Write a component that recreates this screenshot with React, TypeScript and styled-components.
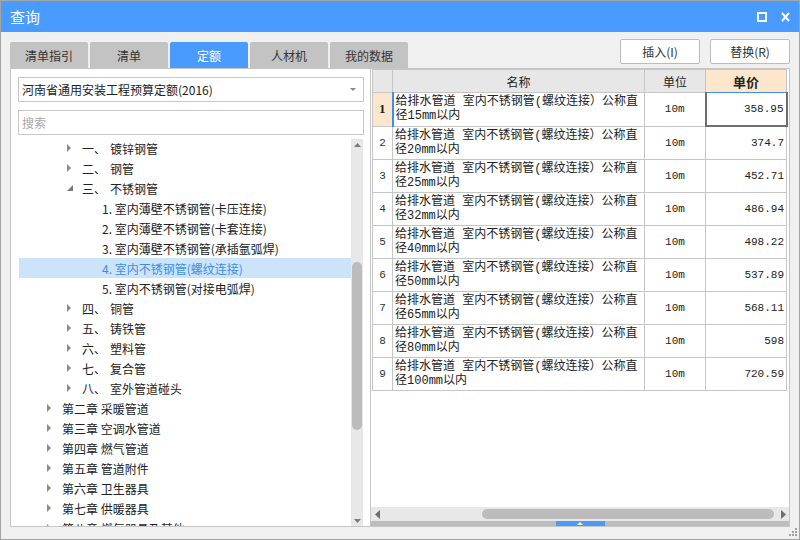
import React from 'react';
import styled, { createGlobalStyle, css } from 'styled-components';

const GlobalStyle = createGlobalStyle`
  html, body {
    margin: 0;
    padding: 0;
  }
  #root {
    width: 800px;
    height: 540px;
  }
`;

const blue = '#4a9bff';
const line = '#c6c6c6';

const Window = styled.div`
  box-sizing: border-box;
  width: 800px;
  height: 540px;
  border: 1px solid #a4a4a4;
  background: #f0f0f0;
  display: flex;
  flex-direction: column;
  font-family: "Noto Sans CJK SC", "Noto Sans", sans-serif;
  font-size: 12px;
  color: #222;
  overflow: hidden;
`;

const TitleBar = styled.div`
  height: 31px;
  flex-shrink: 0;
  background: ${blue};
  color: #fff;
  display: flex;
  align-items: center;
  justify-content: space-between;
  padding: 0 9px 0 9px;
  font-size: 15px;
`;

const TitleIcons = styled.div`
  display: flex;
  align-items: center;
  gap: 14px;
`;

const Body = styled.div`
  flex: 1;
  display: flex;
  flex-direction: column;
  padding: 7px 9px 12px 9px;
  min-height: 0;
  position: relative;
`;

const TopRow = styled.div`
  height: 29px;
  flex-shrink: 0;
  display: flex;
  align-items: flex-start;
`;

const Tabs = styled.div`
  align-self: flex-end;
  display: flex;
  gap: 2px;
`;

const Tab = styled.div<{ $active?: boolean }>`
  width: 78px;
  height: 26px;
  display: flex;
  align-items: center;
  justify-content: center;
  border-radius: 2px 2px 0 0;
  background: #c3c3c3;
  color: #333;
  font-size: 12px;
  ${p => p.$active && css`
    background: ${blue};
    color: #fff;
  `}
`;

const Buttons = styled.div`
  margin-left: auto;
  display: flex;
  gap: 10px;
`;

const Button = styled.div`
  box-sizing: border-box;
  width: 80px;
  height: 25px;
  border: 1px solid #bcbcbc;
  border-radius: 2px;
  background: #fff;
  display: flex;
  align-items: center;
  justify-content: center;
  color: #333;
`;

const Panels = styled.div`
  flex: 1;
  display: flex;
  min-height: 0;
`;

const LeftPanel = styled.div`
  box-sizing: border-box;
  width: 361px;
  flex-shrink: 0;
  background: #fff;
  border: 1px solid ${line};
  padding: 8px 6px 0 7px;
  display: flex;
  flex-direction: column;
`;

const Field = styled.div<{ $placeholder?: boolean }>`
  box-sizing: border-box;
  height: 25px;
  flex-shrink: 0;
  border: 1px solid #c8c8c8;
  display: flex;
  align-items: center;
  padding: 0 4px 0 3px;
  color: ${p => (p.$placeholder ? '#a8a8a8' : '#222')};
  & + & {
    margin-top: 8px;
  }
`;

const Caret = styled.span`
  margin-left: auto;
  width: 0;
  height: 0;
  border-left: 3px solid transparent;
  border-right: 3px solid transparent;
  border-top: 3px solid #888;
  margin-right: 3px;
`;

const TreeBox = styled.div`
  flex: 1;
  min-height: 0;
  display: flex;
  margin-top: 4px;
`;

const TreeList = styled.div`
  flex: 1;
  overflow: hidden;
  margin-left: 1px;
  margin-top: -1px;
`;

const TreeRow = styled.div<{ $indent: number; $selected?: boolean }>`
  height: 20px;
  display: flex;
  align-items: center;
  padding-left: ${p => p.$indent}px;
  white-space: nowrap;
  ${p => p.$selected && css`
    background: #cce4fa;
    color: #3d8fe0;
  `}
`;

const Toggle = styled.span`
  width: 15px;
  height: 20px;
  display: flex;
  align-items: center;
  flex-shrink: 0;
`;

const Num = styled.span`
  width: 28px;
  flex-shrink: 0;
`;

const VScroll = styled.div`
  width: 12px;
  margin-right: 1px;
  background: #e8e8e8;
  display: flex;
  flex-direction: column;
  align-items: center;
`;

const ScrollArrow = styled.div`
  height: 11px;
  display: flex;
  align-items: center;
  justify-content: center;
  flex-shrink: 0;
`;

const VThumb = styled.div`
  width: 10px;
  height: 168px;
  margin-top: 112px;
  border-radius: 5px;
  background: #bcbcbc;
`;

const Spacer = styled.div`
  flex: 1;
`;

const RightPanel = styled.div`
  flex: 1;
  display: flex;
  flex-direction: column;
  border-right: 1px solid ${line};
  border-top: 1px solid ${line};
  border-bottom: 1px solid ${line};
  background: #fff;
  min-width: 0;
`;

const TableArea = styled.div`
  flex: 1;
  min-height: 0;
  overflow: hidden;
  padding-left: 1px;
`;

const Table = styled.table`
  border-collapse: collapse;
  table-layout: fixed;
  width: 414px;
  font-size: 12px;
`;

const Th = styled.th<{ $hot?: boolean }>`
  height: 22px;
  padding: 0;
  background: #e7e7e7;
  border: 1px solid ${line};
  font-weight: normal;
  color: #222;
  ${p => p.$hot && css`
    background: #fde7cc;
    font-weight: bold;
    font-size: 13px;
    border-bottom: 1px solid #3c8ff0;
  `}
`;

const Td = styled.td`
  height: 32px;
  padding: 0;
  border: 1px solid ${line};
  vertical-align: middle;
`;

const NoCell = styled(Td)<{ $current?: boolean }>`
  text-align: center;
  font-family: "Liberation Mono", monospace;
  font-size: 11px;
  color: #333;
  ${p => p.$current && css`
    background: #fde7cc;
    font-family: "Liberation Serif", serif;
    font-weight: bold;
    font-size: 13px;
    color: #222;
  `}
`;

const NameCell = styled(Td)<{ $current?: boolean }>`
  padding: 0 5px 0 2px;
  line-height: 14px;
  font-family: "Liberation Mono", "Noto Sans CJK SC", monospace;
  word-break: break-all;
  ${p => p.$current && css`
    border-left: 2px solid #3c8ff0;
  `}
`;

const UnitCell = styled(Td)`
  text-align: center;
  font-family: "Liberation Mono", monospace;
  font-size: 11px;
`;

const PriceCell = styled(Td)<{ $current?: boolean }>`
  text-align: right;
  padding-right: 2px;
  font-family: "Liberation Mono", monospace;
  font-size: 11px;
  ${p => p.$current && css`
    border-left: 2px solid #6e6e6e;
    border-right: 2px solid #6e6e6e;
    border-bottom: 2px solid #6e6e6e;
  `}
`;

const HScroll = styled.div`
  height: 14px;
  flex-shrink: 0;
  background: #e8e8e8;
  display: flex;
  align-items: center;
  padding: 0 3px 0 4px;
`;

const HThumb = styled.div`
  height: 10px;
  width: 292px;
  margin-left: 102px;
  margin-right: auto;
  border-radius: 5px;
  background: #bcbcbc;
`;

const SplitBar = styled.div`
  height: 5px;
  flex-shrink: 0;
  background: #bdbdbd;
  display: flex;
  justify-content: center;
`;

const SplitHandle = styled.div`
  width: 49px;
  background: ${blue};
  display: flex;
  align-items: center;
  justify-content: center;
`;

const Grip = styled.svg`
  position: absolute;
  right: 1px;
  bottom: 2px;
`;

const RightTri = () => (
  <svg width="5" height="8" viewBox="0 0 5 8"><path d="M0 0 L4 4 L0 8 Z" fill="#8a8a8a" /></svg>
);

const OpenTri = () => (
  <svg width="6" height="6" viewBox="0 0 6 6"><path d="M6 0 L6 6 L0 6 Z" fill="#7a7a7a" /></svg>
);

type Node = { kind: 'chapter' | 'section' | 'item'; no?: string; name: string; open?: boolean; selected?: boolean };

const tree: Node[] = [
  { kind: 'section', no: '一、', name: '镀锌钢管' },
  { kind: 'section', no: '二、', name: '钢管' },
  { kind: 'section', no: '三、', name: '不锈钢管', open: true },
  { kind: 'item', name: '1. 室内薄壁不锈钢管(卡压连接)' },
  { kind: 'item', name: '2. 室内薄壁不锈钢管(卡套连接)' },
  { kind: 'item', name: '3. 室内薄壁不锈钢管(承插氩弧焊)' },
  { kind: 'item', name: '4. 室内不锈钢管(螺纹连接)', selected: true },
  { kind: 'item', name: '5. 室内不锈钢管(对接电弧焊)' },
  { kind: 'section', no: '四、', name: '铜管' },
  { kind: 'section', no: '五、', name: '铸铁管' },
  { kind: 'section', no: '六、', name: '塑料管' },
  { kind: 'section', no: '七、', name: '复合管' },
  { kind: 'section', no: '八、', name: '室外管道碰头' },
  { kind: 'chapter', name: '第二章 采暖管道' },
  { kind: 'chapter', name: '第三章 空调水管道' },
  { kind: 'chapter', name: '第四章 燃气管道' },
  { kind: 'chapter', name: '第五章 管道附件' },
  { kind: 'chapter', name: '第六章 卫生器具' },
  { kind: 'chapter', name: '第七章 供暖器具' },
  { kind: 'chapter', name: '第八章 燃气器具及其他' },
];

const rows = [
  { d: '15', price: '358.95' },
  { d: '20', price: '374.7' },
  { d: '25', price: '452.71' },
  { d: '32', price: '486.94' },
  { d: '40', price: '498.22' },
  { d: '50', price: '537.89' },
  { d: '65', price: '568.11' },
  { d: '80', price: '598' },
  { d: '100', price: '720.59' },
];

const indentOf = (n: Node) => (n.kind === 'chapter' ? 28 : n.kind === 'section' ? 48 : 83);

const App: React.FC = () => {
  const tabs = ['清单指引', '清单', '定额', '人材机', '我的数据'];
  return (
    <>
      <GlobalStyle />
      <Window>
        <TitleBar>
          <span>查询</span>
          <TitleIcons>
            <svg width="10" height="10" viewBox="0 0 10 10">
              <rect x="1" y="1" width="8" height="8" fill="none" stroke="#fff" strokeWidth="2" />
            </svg>
            <svg width="9" height="10" viewBox="0 0 9 10">
              <path d="M1 1 L8 9 M8 1 L1 9" stroke="#fff" strokeWidth="2" />
            </svg>
          </TitleIcons>
        </TitleBar>
        <Body>
          <TopRow>
            <Tabs>
              {tabs.map(t => (
                <Tab key={t} $active={t === '定额'}>{t}</Tab>
              ))}
            </Tabs>
            <Buttons>
              <Button>插入(I)</Button>
              <Button>替换(R)</Button>
            </Buttons>
          </TopRow>
          <Panels>
            <LeftPanel>
              <Field>
                河南省通用安装工程预算定额(2016)
                <Caret />
              </Field>
              <Field $placeholder>搜索</Field>
              <TreeBox>
                <TreeList>
                  {tree.map(n => (
                    <TreeRow key={n.name} $indent={indentOf(n)} $selected={n.selected}>
                      {n.kind !== 'item' && (
                        <Toggle>{n.open ? <OpenTri /> : <RightTri />}</Toggle>
                      )}
                      {n.no && <Num>{n.no}</Num>}
                      <span>{n.name}</span>
                    </TreeRow>
                  ))}
                </TreeList>
                <VScroll>
                  <ScrollArrow>
                    <svg width="7" height="4" viewBox="0 0 7 4"><path d="M0 4 L3.5 0 L7 4 Z" fill="#7a7a7a" /></svg>
                  </ScrollArrow>
                  <VThumb />
                  <Spacer />
                  <ScrollArrow>
                    <svg width="7" height="4" viewBox="0 0 7 4"><path d="M0 0 L3.5 4 L7 0 Z" fill="#7a7a7a" /></svg>
                  </ScrollArrow>
                </VScroll>
              </TreeBox>
            </LeftPanel>
            <RightPanel>
              <TableArea>
                <Table>
                  <colgroup>
                    <col style={{ width: 20 }} />
                    <col style={{ width: 252 }} />
                    <col style={{ width: 61 }} />
                    <col style={{ width: 81 }} />
                  </colgroup>
                  <thead>
                    <tr>
                      <Th />
                      <Th>名称</Th>
                      <Th>单位</Th>
                      <Th $hot>单价</Th>
                    </tr>
                  </thead>
                  <tbody>
                    {rows.map((r, i) => (
                      <tr key={r.d}>
                        <NoCell $current={i === 0}>{i + 1}</NoCell>
                        <NameCell $current={i === 0}>
                          给排水管道 室内不锈钢管(螺纹连接）公称直径{r.d}mm以内
                        </NameCell>
                        <UnitCell>10m</UnitCell>
                        <PriceCell $current={i === 0}>{r.price}</PriceCell>
                      </tr>
                    ))}
                  </tbody>
                </Table>
              </TableArea>
              <HScroll>
                <svg width="5" height="9" viewBox="0 0 5 9"><path d="M5 0 L0 4.5 L5 9 Z" fill="#6e6e6e" /></svg>
                <HThumb />
                <svg width="5" height="9" viewBox="0 0 5 9"><path d="M0 0 L5 4.5 L0 9 Z" fill="#6e6e6e" /></svg>
              </HScroll>
              <SplitBar>
                <SplitHandle>
                  <svg width="6" height="3" viewBox="0 0 6 3"><path d="M0 3 L3 0 L6 3 Z" fill="#fff" /></svg>
                </SplitHandle>
              </SplitBar>
            </RightPanel>
          </Panels>
          <Grip width="9" height="9" viewBox="0 0 9 9">
            <g fill="#a0a0a0">
              <rect x="6" y="0" width="2" height="2" />
              <rect x="3" y="3" width="2" height="2" />
              <rect x="6" y="3" width="2" height="2" />
              <rect x="0" y="6" width="2" height="2" />
              <rect x="3" y="6" width="2" height="2" />
              <rect x="6" y="6" width="2" height="2" />
            </g>
          </Grip>
        </Body>
      </Window>
    </>
  );
};

export default App;
